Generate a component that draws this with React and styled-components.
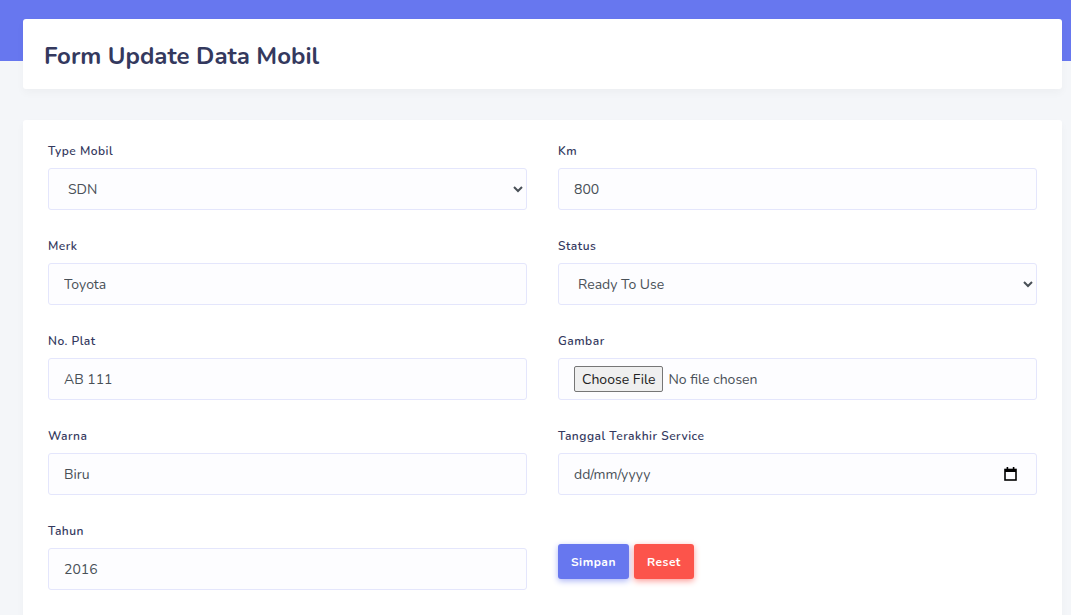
import React from "react";
import styled, { createGlobalStyle } from "styled-components";

const GlobalStyle = createGlobalStyle`
  html, body {
    margin: 0;
    padding: 0;
    overflow: hidden;
  }
  body {
    background: #f4f6f9;
    font-family: Nunito, "Noto Sans", sans-serif;
    color: #34395e;
  }
  * {
    box-sizing: border-box;
  }
`;

const Page = styled.div`
  position: relative;
  min-height: 615px;
`;

const TopBar = styled.div`
  position: absolute;
  top: 0;
  left: 0;
  right: 0;
  height: 61px;
  background: #6777ef;
  z-index: 0;
`;

const Main = styled.div`
  position: relative;
  z-index: 1;
  padding: 19px 9px 0 23px;
`;

const HeaderCard = styled.div`
  height: 70px;
  background: #fff;
  border-radius: 3px;
  box-shadow: 0 4px 8px rgba(0, 0, 0, 0.03);
  display: flex;
  align-items: center;
  padding: 3px 0 0 21px;
`;

const Title = styled.h1`
  margin: 0;
  font-size: 24px;
  font-weight: 700;
  color: #34395e;
  line-height: 34px;
`;

const Card = styled.div`
  margin-top: 31px;
  background: #fff;
  border-radius: 3px;
  box-shadow: 0 4px 8px rgba(0, 0, 0, 0.03);
  padding: 21px 25px 40px;
`;

const Grid = styled.div`
  display: grid;
  grid-template-columns: 1fr 1fr;
  column-gap: 31px;
`;

const Column = styled.div`
  display: flex;
  flex-direction: column;
`;

const Group = styled.div`
  margin-bottom: 26px;
`;

const Label = styled.label`
  display: block;
  font-size: 12px;
  font-weight: 600;
  letter-spacing: 0.5px;
  line-height: 21px;
  color: #34395e;
  margin-bottom: 6px;
`;

const fieldCss = `
  display: block;
  width: 100%;
  height: 42px;
  background-color: #fdfdff;
  border: 1px solid #e4e6fc;
  border-radius: 3px;
  padding: 0 15px;
  font-family: Nunito, "Noto Sans", sans-serif;
  font-size: 14px;
  color: #495057;
  outline: none;
`;

const Input = styled.input`
  ${fieldCss}

  &::placeholder {
    color: #495057;
    opacity: 1;
  }
`;

const Select = styled.select`
  ${fieldCss}
  padding: 0 10px 0 15px;
`;

const FileBox = styled.div`
  ${fieldCss}
  display: flex;
  align-items: center;

  input {
    font-family: Nunito, "Noto Sans", sans-serif;
    font-size: 14px;
    color: #495057;
  }

  input::file-selector-button {
    font-family: Nunito, "Noto Sans", sans-serif;
    font-size: 14px;
    color: #212121;
    height: 26px;
    padding: 0 7px;
    margin-right: 5px;
    background: #efefef;
    border: 1px solid #767676;
    border-radius: 2px;
  }
`;

const DateWrap = styled.div`
  position: relative;
`;

const CalendarIcon = styled.svg`
  position: absolute;
  right: 20px;
  top: 14px;
  width: 13px;
  height: 14px;
  pointer-events: none;
`;

const Actions = styled.div`
  display: flex;
  gap: 5px;
  padding-top: 23px;
`;

const Button = styled.button`
  height: 35px;
  padding: 0 13px;
  border: none;
  border-radius: 3px;
  font-family: Nunito, "Noto Sans", sans-serif;
  font-size: 12px;
  font-weight: 700;
  letter-spacing: 0.5px;
  color: #fff;
  cursor: pointer;
  background: ${(p) => (p.$danger ? "#fc544b" : "#6777ef")};
  box-shadow: 0 2px 6px ${(p) => (p.$danger ? "#fd9b96" : "#acb5f6")};
`;

function Field({ label, children }) {
  return (
    <Group>
      <Label>{label}</Label>
      {children}
    </Group>
  );
}

export default function App() {
  return (
    <Page>
      <GlobalStyle />
      <TopBar />
      <Main>
        <HeaderCard>
          <Title>Form Update Data Mobil</Title>
        </HeaderCard>
        <Card>
          <Grid>
            <Column>
              <Field label="Type Mobil">
                <Select defaultValue="SDN">
                  <option>SDN</option>
                  <option>SUV</option>
                  <option>MPV</option>
                </Select>
              </Field>
              <Field label="Merk">
                <Input defaultValue="Toyota" />
              </Field>
              <Field label="No. Plat">
                <Input defaultValue="AB 111" />
              </Field>
              <Field label="Warna">
                <Input defaultValue="Biru" />
              </Field>
              <Field label="Tahun">
                <Input defaultValue="2016" />
              </Field>
            </Column>
            <Column>
              <Field label="Km">
                <Input defaultValue="800" />
              </Field>
              <Field label="Status">
                <Select defaultValue="Ready To Use">
                  <option>Ready To Use</option>
                  <option>In Service</option>
                </Select>
              </Field>
              <Field label="Gambar">
                <FileBox>
                  <input type="file" />
                </FileBox>
              </Field>
              <Field label="Tanggal Terakhir Service">
                <DateWrap>
                  <Input placeholder="dd/mm/yyyy" />
                  <CalendarIcon viewBox="0 0 13 14">
                    <rect x="1" y="2.5" width="11" height="10.5" fill="none" stroke="#000" strokeWidth="1.6" />
                    <rect x="1" y="2.5" width="11" height="2.5" fill="#000" />
                    <rect x="2.6" y="0" width="1.6" height="3" fill="#000" />
                    <rect x="8.8" y="0" width="1.6" height="3" fill="#000" />
                  </CalendarIcon>
                </DateWrap>
              </Field>
              <Actions>
                <Button type="button">Simpan</Button>
                <Button type="button" $danger>
                  Reset
                </Button>
              </Actions>
            </Column>
          </Grid>
        </Card>
      </Main>
    </Page>
  );
}
